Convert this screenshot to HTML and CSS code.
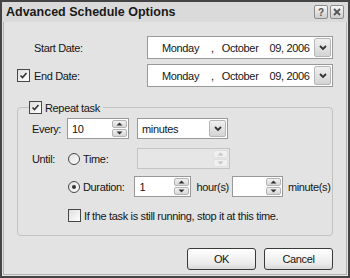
FILE: index.html
```html
<!DOCTYPE html>
<html lang="en">
<head>
    <meta charset="UTF-8">
    <meta name="viewport" content="width=device-width, initial-scale=1.0">
    <title>Advanced Schedule Options</title>
    <link rel="stylesheet" href="styles.css">
</head>
<body>
    <div class="window">
        <div class="titlebar">
            <span class="title">Advanced Schedule Options</span>
            <div class="caption-buttons">
                <span class="caption-btn">?</span>
                <span class="caption-btn">
                    <svg width="8" height="8" viewBox="0 0 8 8"><path d="M1 1 L7 7 M7 1 L1 7" stroke="#555" stroke-width="1.8"/></svg>
                </span>
            </div>
        </div>

        <div class="content">
            <div class="date-row">
                <div class="date-label"><span class="indent">Start Date:</span></div>
                <div class="datepicker">
                    <div class="date-text">
                        <span class="d-day">Monday</span><span class="d-sep">,</span><span class="d-month">October</span><span>09, 2006</span>
                    </div>
                    <span class="drop-btn">
                        <svg width="8" height="6" viewBox="0 0 8 6"><path d="M1 1 L4 4 L7 1" fill="none" stroke="#333" stroke-width="1.8"/></svg>
                    </span>
                </div>
            </div>

            <div class="date-row second">
                <div class="date-label">
                    <span class="check checked">
                        <svg width="9" height="9" viewBox="0 0 9 9"><path d="M1.5 4.5 L3.5 6.5 L7.5 2" fill="none" stroke="#333" stroke-width="1.6"/></svg>
                    </span>
                    <span>End Date:</span>
                </div>
                <div class="datepicker">
                    <div class="date-text">
                        <span class="d-day">Monday</span><span class="d-sep">,</span><span class="d-month">October</span><span>09, 2006</span>
                    </div>
                    <span class="drop-btn">
                        <svg width="8" height="6" viewBox="0 0 8 6"><path d="M1 1 L4 4 L7 1" fill="none" stroke="#333" stroke-width="1.8"/></svg>
                    </span>
                </div>
            </div>

            <fieldset class="group">
                <legend>
                    <span class="check checked">
                        <svg width="9" height="9" viewBox="0 0 9 9"><path d="M1.5 4.5 L3.5 6.5 L7.5 2" fill="none" stroke="#333" stroke-width="1.6"/></svg>
                    </span>
                    <span>Repeat task</span>
                </legend>

                <div class="opt-row every-row">
                    <span class="opt-label">Every:</span>
                    <div class="field num-every">
                        <span class="field-value">10</span>
                        <span class="spin">
                            <span class="spin-btn"><svg width="7" height="4" viewBox="0 0 7 4"><path d="M0.5 3.5 L3.5 0.5 L6.5 3.5 Z" fill="#333"/></svg></span>
                            <span class="spin-btn"><svg width="7" height="4" viewBox="0 0 7 4"><path d="M0.5 0.5 L3.5 3.5 L6.5 0.5 Z" fill="#333"/></svg></span>
                        </span>
                    </div>
                    <div class="field select-unit">
                        <span class="field-value">minutes</span>
                        <span class="drop-btn">
                            <svg width="8" height="6" viewBox="0 0 8 6"><path d="M1 1 L4 4 L7 1" fill="none" stroke="#333" stroke-width="1.8"/></svg>
                        </span>
                    </div>
                </div>

                <div class="opt-row until-row">
                    <span class="opt-label">Until:</span>
                    <span class="radio"></span>
                    <span class="radio-text">Time:</span>
                    <div class="field disabled time-field">
                        <span class="field-value"></span>
                        <span class="spin">
                            <span class="spin-btn"><svg width="7" height="4" viewBox="0 0 7 4"><path d="M0.5 3.5 L3.5 0.5 L6.5 3.5 Z" fill="#c4c4c4"/></svg></span>
                            <span class="spin-btn"><svg width="7" height="4" viewBox="0 0 7 4"><path d="M0.5 0.5 L3.5 3.5 L6.5 0.5 Z" fill="#c4c4c4"/></svg></span>
                        </span>
                    </div>
                </div>

                <div class="opt-row duration-row">
                    <span class="opt-label"></span>
                    <span class="radio selected"></span>
                    <span class="radio-text">Duration:</span>
                    <div class="field num-hours">
                        <span class="field-value">1</span>
                        <span class="spin">
                            <span class="spin-btn"><svg width="7" height="4" viewBox="0 0 7 4"><path d="M0.5 3.5 L3.5 0.5 L6.5 3.5 Z" fill="#333"/></svg></span>
                            <span class="spin-btn"><svg width="7" height="4" viewBox="0 0 7 4"><path d="M0.5 0.5 L3.5 3.5 L6.5 0.5 Z" fill="#333"/></svg></span>
                        </span>
                    </div>
                    <span class="unit">hour(s)</span>
                    <div class="field num-minutes">
                        <span class="field-value"></span>
                        <span class="spin">
                            <span class="spin-btn"><svg width="7" height="4" viewBox="0 0 7 4"><path d="M0.5 3.5 L3.5 0.5 L6.5 3.5 Z" fill="#333"/></svg></span>
                            <span class="spin-btn"><svg width="7" height="4" viewBox="0 0 7 4"><path d="M0.5 0.5 L3.5 3.5 L6.5 0.5 Z" fill="#333"/></svg></span>
                        </span>
                    </div>
                    <span class="unit">minute(s)</span>
                </div>

                <div class="opt-row stop-row">
                    <span class="opt-label"></span>
                    <span class="check"></span>
                    <span class="radio-text">If the task is still running, stop it at this time.</span>
                </div>
            </fieldset>

            <div class="buttons">
                <button class="btn">OK</button>
                <button class="btn">Cancel</button>
            </div>
        </div>
    </div>
</body>
</html>
```

FILE: styles.css
```css
body {
    margin: 0;
    font-family: "Liberation Sans", Arial, sans-serif;
    font-size: 11px;
    letter-spacing: -0.35px;
    color: #151515;
    background-color: #e3e3e3;
}

.window {
    width: 350px;
    height: 278px;
    box-sizing: border-box;
    border: 2px solid #444;
    background-color: #e3e3e3;
    display: flex;
    flex-direction: column;
}

.titlebar {
    height: 20px;
    display: flex;
    align-items: center;
    justify-content: space-between;
    padding: 0 4px 0 4px;
    background-color: #dadada;
}

.title {
    font-weight: bold;
    font-size: 12.5px;
    letter-spacing: 0;
    color: #1a1a1a;
}

.caption-buttons {
    display: flex;
    gap: 2px;
}

.caption-btn {
    width: 12px;
    height: 12px;
    border: 1px solid #8c8c8c;
    border-radius: 2px;
    background: linear-gradient(#f6f6f6, #cdcdcd);
    display: flex;
    align-items: center;
    justify-content: center;
    font-size: 10px;
    font-weight: bold;
    letter-spacing: 0;
    color: #555;
}

.content {
    flex: 1;
    margin: 0 1px 1px 1px;
    border: 1px solid #b2b2b2;
    border-top: none;
    padding: 14px 13px 0 13px;
    display: flex;
    flex-direction: column;
}

/* date rows */

.date-row {
    display: flex;
    align-items: center;
    height: 23px;
}

.date-row.second {
    margin-top: 5px;
}

.date-label {
    width: 130px;
    display: flex;
    align-items: center;
    gap: 4px;
}

.indent {
    padding-left: 17px;
}

.datepicker {
    flex: 1;
    height: 23px;
    box-sizing: border-box;
    border: 1px solid #999;
    background-color: #fff;
    display: flex;
    align-items: center;
    padding: 1px;
}

.date-text {
    flex: 1;
    padding-left: 13px;
    font-size: 11px;
}

.d-day {
    margin-right: 12px;
}

.d-sep {
    margin-right: 8px;
}

.d-month {
    margin-right: 11px;
}

.drop-btn {
    width: 17px;
    height: 19px;
    box-sizing: border-box;
    border: 1px solid #b6b6b6;
    border-radius: 2px;
    background: linear-gradient(#f0f0f0, #d4d4d4);
    display: flex;
    align-items: center;
    justify-content: center;
}

/* check boxes and radios */

.check {
    width: 13px;
    height: 13px;
    box-sizing: border-box;
    border: 1px solid #474747;
    background: linear-gradient(135deg, #dedede, #ffffff);
    display: inline-flex;
    align-items: center;
    justify-content: center;
    flex-shrink: 0;
}

.radio {
    width: 12px;
    height: 12px;
    box-sizing: border-box;
    border: 1px solid #474747;
    border-radius: 50%;
    background: linear-gradient(135deg, #dedede, #ffffff);
    display: inline-flex;
    align-items: center;
    justify-content: center;
    flex-shrink: 0;
}

.radio.selected::after {
    content: "";
    width: 4px;
    height: 4px;
    border-radius: 50%;
    background-color: #333;
}

.radio-text {
    margin-left: 3px;
    white-space: nowrap;
}

/* repeat group */

.group {
    margin: 14px 0 0 0;
    padding: 4px 0 13px 14px;
    min-width: 0;
    border: 1px solid #c2c2c2;
    border-radius: 4px;
}

.group legend {
    display: flex;
    align-items: center;
    gap: 3px;
    padding: 0 3px 0 0;
    margin-left: -3px;
}

.opt-row {
    display: flex;
    align-items: center;
}

.opt-label {
    width: 36px;
    flex-shrink: 0;
}

.until-row {
    margin-top: 9px;
}

.duration-row {
    margin-top: 7px;
}

.stop-row {
    margin-top: 12px;
}

.field {
    height: 21px;
    box-sizing: border-box;
    border: 1px solid #999;
    background-color: #fff;
    display: flex;
    align-items: center;
    padding: 1px;
    flex-shrink: 0;
}

.field-value {
    flex: 1;
    padding-left: 3px;
}

.field.disabled {
    background-color: #e6e6e6;
    border-color: #c4c4c4;
}

.num-every {
    width: 62px;
    margin-left: -1px;
}

.select-unit {
    width: 91px;
    margin-left: 8px;
}

.select-unit .drop-btn {
    height: 17px;
}

.time-field {
    width: 93px;
    margin-left: 29px;
}

.num-hours {
    width: 57px;
    margin-left: 10px;
}

.num-minutes {
    width: 51px;
    margin-left: 3px;
}

.unit {
    margin-left: 5px;
    white-space: nowrap;
}

.spin {
    width: 15px;
    height: 17px;
    display: flex;
    flex-direction: column;
    gap: 1px;
}

.spin-btn {
    flex: 1;
    box-sizing: border-box;
    border: 1px solid #b4b4b4;
    border-radius: 2px;
    background: linear-gradient(#f2f2f2, #d6d6d6);
    display: flex;
    align-items: center;
    justify-content: center;
}

.disabled .spin-btn {
    border-color: #e0e0e0;
    background: #f0f0f0;
}

/* dialog buttons */

.buttons {
    display: flex;
    justify-content: flex-end;
    gap: 8px;
    margin-top: 12px;
}

.btn {
    width: 69px;
    height: 22px;
    border: 1px solid #3a3a3a;
    border-radius: 3px;
    background: linear-gradient(#ffffff, #ececec 70%, #d8d8d8);
    font-family: "Liberation Sans", Arial, sans-serif;
    font-size: 11px;
    letter-spacing: -0.35px;
    color: #151515;
    padding: 0;
}
```
